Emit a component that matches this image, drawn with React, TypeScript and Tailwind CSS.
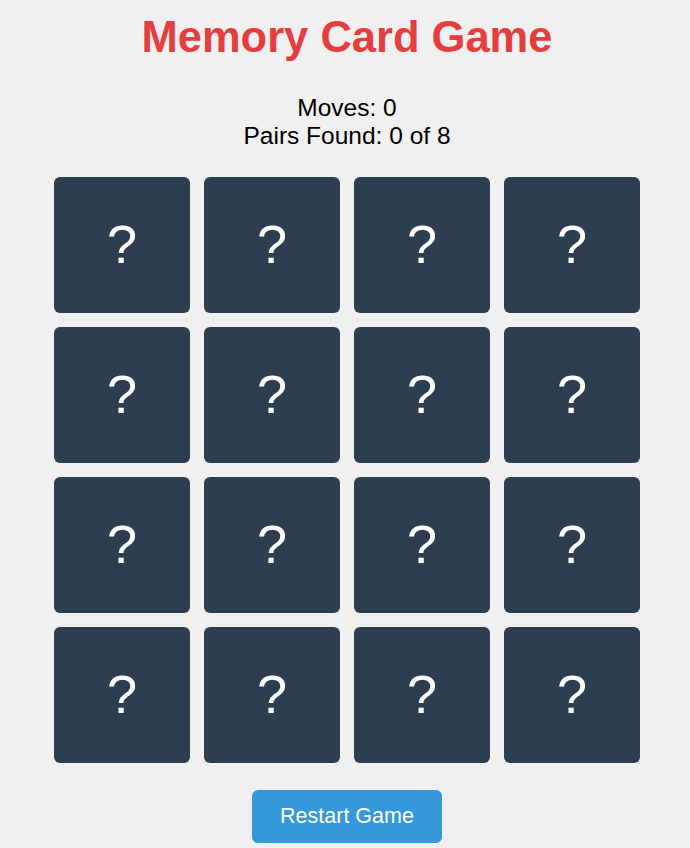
import { useState } from "react";

const CARD_COUNT = 16;
const TOTAL_PAIRS = 8;

const App = () => {
    const [moves, setMoves] = useState(0);
    const [pairs, setPairs] = useState(0);

    const restart = () => {
        setMoves(0);
        setPairs(0);
    };

    return (
        <div className="min-h-[848px] bg-[#f0f0f0] font-['Liberation_Sans',Arial,sans-serif] text-black">
            <div className="flex flex-col items-center pl-[4px] pt-[13px]">
                <h1 className="text-[43.5px] font-bold leading-[49px] text-[#e53e3e]">Memory Card Game</h1>
                <div className="mt-[32px] text-center text-[24.5px] leading-[28px]">
                    <p>Moves: {moves}</p>
                    <p>Pairs Found: {pairs} of {TOTAL_PAIRS}</p>
                </div>
                <div className="mt-[27px] grid grid-cols-[repeat(4,136px)] gap-[14px]">
                    {Array.from({ length: CARD_COUNT }).map((_, index) => (
                        <button
                            key={index}
                            onClick={() => setMoves((m) => m + 1)}
                            className="flex h-[136px] w-[136px] items-center justify-center rounded-md bg-[#2c3e50] pb-[2px] text-[54px] leading-none text-white"
                        >
                            ?
                        </button>
                    ))}
                </div>
                <button
                    onClick={restart}
                    className="mt-[27px] h-[53px] w-[190px] rounded-md bg-[#3498db] text-[21.5px] text-white"
                >
                    Restart Game
                </button>
            </div>
        </div>
    );
};

export default App;
